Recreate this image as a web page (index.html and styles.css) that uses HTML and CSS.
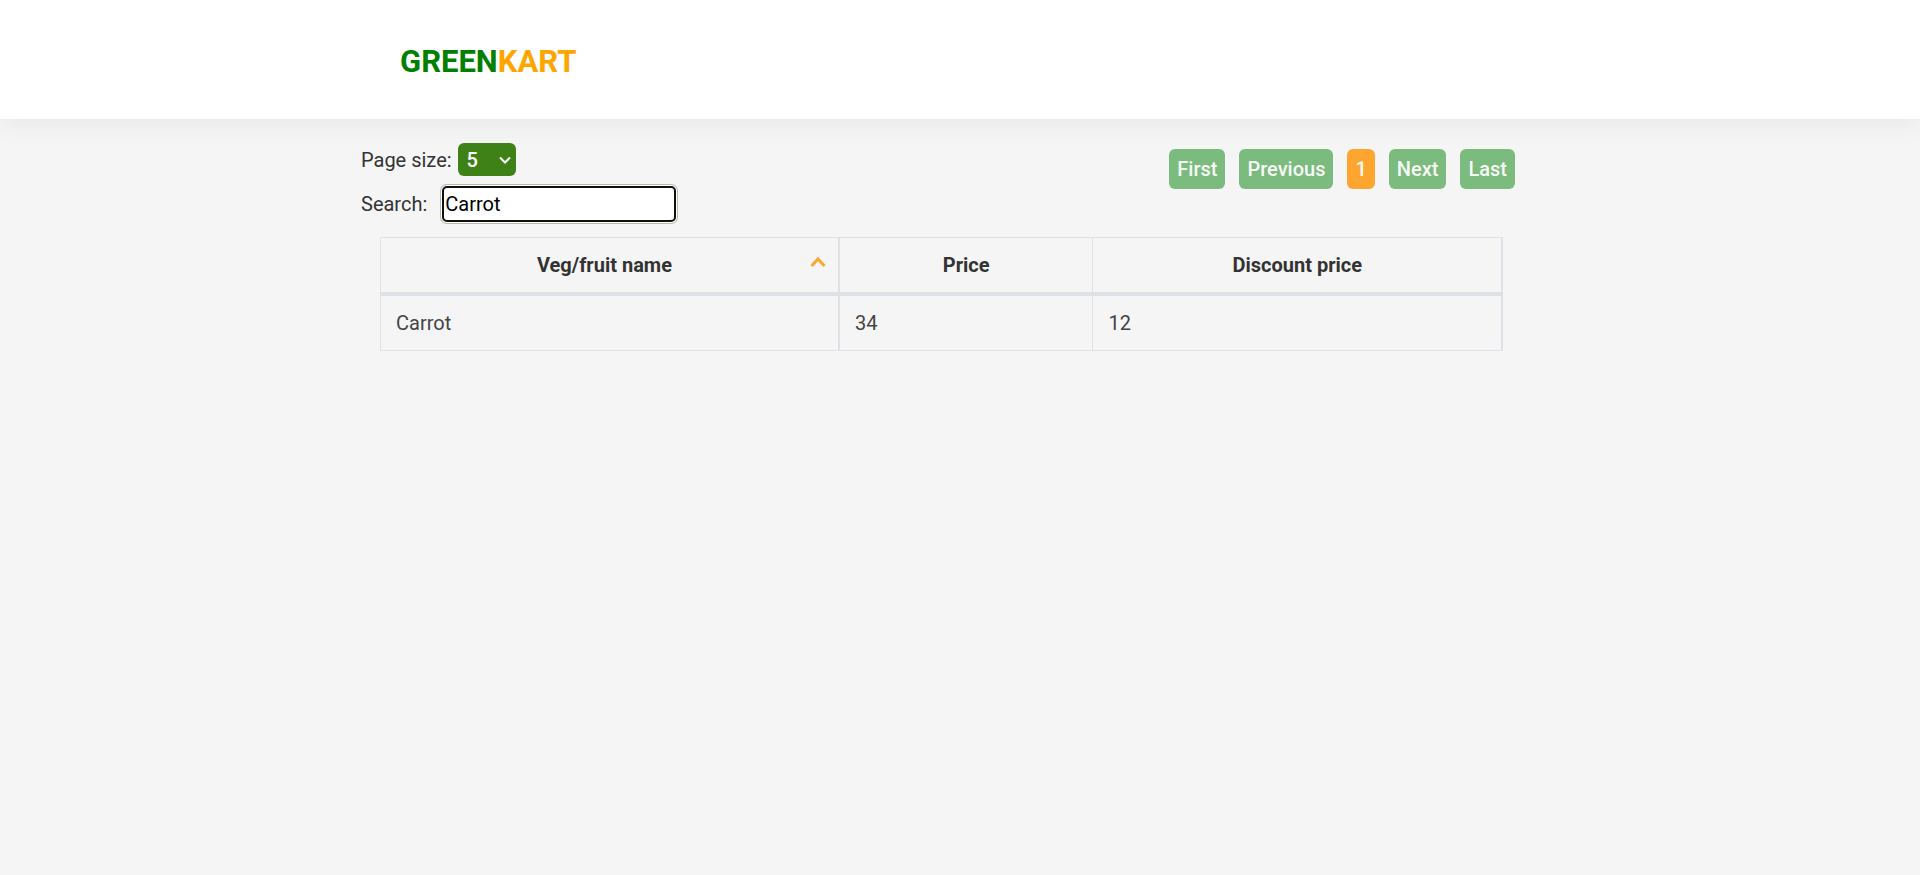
FILE: index.html
```html
<!DOCTYPE html>
<html lang="en">
<head>
<meta charset="utf-8">
<meta name="viewport" content="width=device-width, initial-scale=1">
<title>GreenKart - offers</title>
<link rel="stylesheet" href="styles.css">
</head>
<body>
<header class="header">
  <div class="container">
    <div class="brand">GREEN<span class="brand-accent">KART</span></div>
  </div>
</header>
<main class="container content">
  <div class="toolbar">
    <div class="filters">
      <div class="field">
        <label for="page-size">Page size:</label>
        <div class="select-wrap">
          <select id="page-size" class="page-size">
            <option selected>5</option>
            <option>10</option>
            <option>20</option>
          </select>
          <svg class="chevron" viewBox="0 0 12 8" aria-hidden="true"><path d="M1 1.5l5 5 5-5"/></svg>
        </div>
      </div>
      <div class="field search-field">
        <label for="search">Search:</label>
        <input id="search" class="search" type="text" value="Carrot">
      </div>
    </div>
    <nav class="pagination" aria-label="Pagination">
      <button class="page" type="button">First</button>
      <button class="page" type="button">Previous</button>
      <button class="page current" type="button" aria-current="page">1</button>
      <button class="page" type="button">Next</button>
      <button class="page" type="button">Last</button>
    </nav>
  </div>
  <div class="table-wrap">
    <table class="offers">
      <thead>
        <tr>
          <th class="name" aria-sort="ascending">Veg/fruit name<svg class="sort" viewBox="0 0 16 12" aria-hidden="true"><path d="M1.500 10L8 3l6.500 7"/></svg></th>
          <th class="price">Price</th>
          <th>Discount price</th>
        </tr>
      </thead>
      <tbody>
        <tr>
          <td>Carrot</td>
          <td>34</td>
          <td>12</td>
        </tr>
      </tbody>
    </table>
  </div>
</main>
</body>
</html>
```

FILE: styles.css
```css
* {
  box-sizing: border-box;
}

body {
  margin: 0;
  background: #f5f5f5;
  color: #333;
  font: 20px/30px Roboto, sans-serif;
}

.container {
  max-width: 1200px;
  margin: 0 auto;
}

.header {
  padding: 43px 0 38px;
  background: #fff;
  box-shadow: 0 0 30px rgba(0, 0, 0, 0.08);
}

.brand {
  padding: 0 40px;
  color: green;
  font-size: 31px;
  font-weight: 700;
  line-height: 38px;
}

.brand-accent {
  color: orange;
}

.content {
  padding: 24px 45px 24px 1px;
}

.toolbar {
  display: flex;
  justify-content: space-between;
  align-items: flex-start;
}

.field {
  display: flex;
  align-items: center;
  gap: 6px;
}

.search-field {
  gap: 15px;
  margin-top: 10px;
}

.select-wrap {
  position: relative;
}

.page-size {
  display: block;
  appearance: none;
  width: 58px;
  height: 33px;
  padding: 0 9px;
  border: 0;
  border-radius: 6px;
  background: #3e8217;
  color: #fff;
  font: 500 20px/30px Roboto, sans-serif;
}

.chevron {
  position: absolute;
  top: 13px;
  right: 5px;
  width: 12px;
  height: 8px;
  fill: none;
  stroke: #fff;
  stroke-width: 2;
}

.search {
  width: 234px;
  height: 36px;
  padding: 0 1px;
  border: 2px solid #101010;
  border-radius: 5px;
  outline: 0;
  background: #fff;
  box-shadow: 0 0 0 1px #fff, 0 0 0 2px #bcb9a6;
  color: #000;
  font: 20px/30px Roboto, sans-serif;
}

.pagination {
  display: flex;
  gap: 14px;
  padding-top: 6px;
}

.page {
  height: 40px;
  padding: 0 8px;
  border: 0;
  border-radius: 6px;
  background: #7cbb7e;
  color: #f6faf6;
  font: 500 20px/30px Roboto, sans-serif;
}

.page.current {
  background: #fda52f;
}

.table-wrap {
  padding: 15px 12px 0 19px;
}

.offers {
  width: 100%;
  border: solid #dee2e6;
  border-width: 1px 0 0 1px;
  border-spacing: 0;
  table-layout: fixed;
}

.offers th,
.offers td {
  padding: 12px 15px;
  border: solid #dee2e6;
  border-width: 0 2px 1px 0;
  text-align: left;
}

.offers th {
  position: relative;
  border-bottom-width: 4px;
  font-weight: 700;
  text-align: center;
}

.offers td {
  color: #444;
}

.offers th:nth-child(2),
.offers td:nth-child(2) {
  border-right-width: 1px;
}

.offers .name {
  width: 40.9%;
  padding-right: 25px;
}

.price {
  width: 22.6%;
}

.sort {
  position: absolute;
  top: 18px;
  right: 12px;
  width: 16px;
  height: 12px;
  fill: none;
  stroke: #fda52f;
  stroke-width: 3;
}
```
